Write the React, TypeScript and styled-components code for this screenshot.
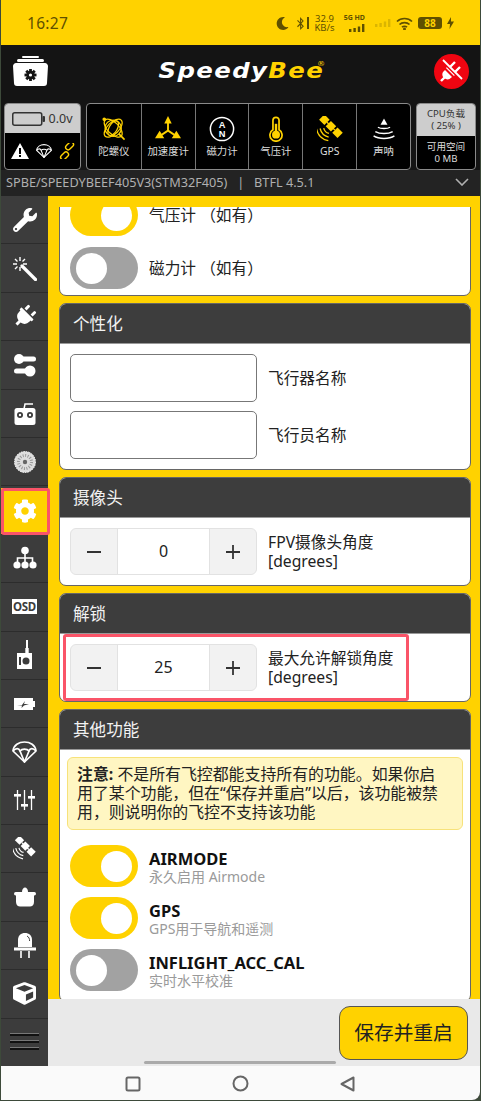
import React from 'react';
import styled, { createGlobalStyle } from 'styled-components';
import { FaWrench, FaPlug, FaCog, FaCube, FaMoon, FaBluetoothB } from 'react-icons/fa';

const Global = createGlobalStyle`
  html, body { margin: 0; padding: 0; background: #3d4a3a; }
  * { box-sizing: border-box; }
  body { font-family: "Noto Sans", "Noto Sans CJK SC", sans-serif; }
`;

const YELLOW = '#ffd200';

const Screen = styled.div`
  width: 479px;
  height: 1100px;
  margin-left: 1px;
  display: flex;
  flex-direction: column;
  overflow: hidden;
  border-radius: 0 0 8px 0;
  background: #141414;
`;

const StatusBar = styled.div`
  height: 45px;
  flex: none;
  background: ${YELLOW};
  color: #5f5000;
  display: flex;
  align-items: center;
  padding: 1px 26px 0 26px;
`;
const Clock = styled.div`
  font-size: 15.5px;
  flex: 1;
  letter-spacing: 0.3px;
`;
const StatusIcons = styled.div`
  display: flex;
  align-items: center;
  gap: 5px;
`;
const VibrateBar = styled.div`
  width: 2px;
  height: 12px;
  background: #5f5000;
  margin-left: -5px;
`;
const Speed = styled.div`
  font-size: 9.5px;
  line-height: 9px;
  text-align: center;
  width: 21px;
`;
const Net = styled.div`
  font-size: 7px;
  line-height: 8px;
  font-weight: 700;
  width: 22px;
  margin-left: 3px;
  display: flex;
  flex-direction: column;
  align-items: flex-end;
  gap: 2px;
`;
const FadedBars = styled.div`
  margin-left: 5px;
  display: flex;
  align-items: center;
`;
const BatteryPill = styled.div`
  width: 24px;
  height: 12px;
  border-radius: 3px;
  background: #5f5000;
  color: ${YELLOW};
  font-size: 10px;
  font-weight: 700;
  line-height: 12px;
  text-align: center;
`;

const Header = styled.div`
  height: 58px;
  flex: none;
  display: flex;
  align-items: center;
  justify-content: space-between;
  padding: 0 11px 6px 12px;
  background: #141414;
`;
const Logo = styled.div`
  position: relative;
  font-family: "DejaVu Sans", sans-serif;
  font-size: 21px;
  font-weight: 700;
  font-style: italic;
  letter-spacing: 1.2px;
  color: #fff;
  transform: scaleX(1.16);
  span { color: ${YELLOW}; }
  sup {
    position: absolute;
    font-size: 7px;
    font-style: normal;
    font-weight: 400;
    top: 1px;
    right: -2px;
    color: ${YELLOW};
  }
`;
const Disconnected = styled.div`
  width: 35px;
  height: 35px;
  border-radius: 50%;
  background: #f00511;
  display: flex;
  align-items: center;
  justify-content: center;
`;

const Strip = styled.div`
  flex: none;
  height: 67px;
  display: flex;
  gap: 5px;
  padding: 0 3px;
  background: #141414;
`;
const Box = styled.div<{ $w: number }>`
  width: ${p => p.$w}px;
  border: 1px solid #8a8a8a;
  border-radius: 4px;
  background: #000;
  overflow: hidden;
  display: flex;
  flex-direction: column;
`;
const BoxTop = styled.div<{ $h: number }>`
  height: ${p => p.$h}px;
  flex: none;
  background: #cdcdcd;
  color: #333;
  font-size: 9.6px;
  line-height: 12px;
  display: flex;
  flex-direction: column;
  align-items: center;
  justify-content: center;
  text-align: center;
`;
const BatteryLine = styled.div`
  display: flex;
  align-items: center;
  gap: 3px;
  font-size: 12.5px;
  color: #333;
`;
const BoxBottom = styled.div`
  flex: 1;
  color: #ddd;
  font-size: 9.6px;
  line-height: 12px;
  display: flex;
  flex-direction: column;
  align-items: center;
  justify-content: center;
`;
const AlertIcons = styled.div`
  flex: 1;
  display: flex;
  align-items: center;
  justify-content: center;
  gap: 7px;
`;
const Sensors = styled.div`
  width: 325px;
  border: 1px solid #8a8a8a;
  border-radius: 4px;
  background: #000;
  display: grid;
  grid-template-columns: repeat(6, 1fr);
`;
const Sensor = styled.div`
  border-left: 1px solid #777;
  &:first-child { border-left: 0; }
  color: #ddd;
  display: flex;
  flex-direction: column;
  align-items: center;
  padding-top: 12px;
  gap: 3px;
  white-space: nowrap;
  svg { display: block; width: 26px; height: 26px; }
`;
const SensorLabel = styled.div`
  font-size: 10.4px;
  line-height: 13px;
`;

const InfoRow = styled.div`
  height: 26px;
  flex: none;
  background: #232323;
  color: #b0b0b0;
  font-size: 12.7px;
  display: flex;
  align-items: center;
  justify-content: space-between;
  padding: 0 11px 2px 5px;
  white-space: pre;
`;

const Main = styled.div`
  flex: 1;
  min-height: 0;
  display: flex;
`;
const Sidebar = styled.div`
  width: 47px;
  flex: none;
  background: #3c3c3c;
  display: flex;
  flex-direction: column;
`;
const NavItem = styled.div<{ $active?: boolean }>`
  position: relative;
  height: ${p => (p.$active ? 46.4 : 48.4)}px;
  margin-top: ${p => (p.$active ? 2 : 0)}px;
  flex: none;
  display: flex;
  align-items: center;
  justify-content: center;
  color: #fff;
  border-bottom: 1px solid #2c2c2c;
  background: ${p => (p.$active ? YELLOW : 'transparent')};
  ${p =>
    p.$active &&
    `&::after {
      content: '';
      position: absolute;
      left: 0;
      right: -2px;
      top: 0;
      bottom: -1px;
      border: 3px solid #fa5468;
      border-radius: 3px;
      z-index: 2;
    }`}
`;
const OsdTag = styled.div`
  background: #fff;
  color: #3c3c3c;
  font-size: 11.5px;
  font-weight: 700;
  line-height: 15px;
  padding: 0 1px;
  letter-spacing: -0.3px;
`;
const Hamburger = styled.div`
  flex: 1;
  display: flex;
  flex-direction: column;
  justify-content: center;
  gap: 4px;
  padding: 0 9px 2px;
`;
const HamburgerLine = styled.div`
  height: 3px;
  background: #111;
  border-top: 1px solid #777;
`;

const Column = styled.div`
  flex: 1;
  min-width: 0;
  display: flex;
  flex-direction: column;
  position: relative;
`;
const Scroller = styled.div`
  flex: 1;
  min-height: 0;
  background: ${YELLOW};
  padding: 11px 9px 0 11px;
  display: flex;
`;
const Clip = styled.div`
  flex: 1;
  overflow: hidden;
  display: flex;
  flex-direction: column;
  gap: 7px;
`;
const Panel = styled.div<{ $offset?: number }>`
  flex: none;
  border: 1px solid #666;
  border-radius: 7px;
  background: #fff;
  margin-top: ${p => p.$offset ?? 0}px;
  overflow: hidden;
`;
const PanelHead = styled.div`
  height: 40px;
  background: #3d3d3d;
  color: #f2f2f2;
  font-size: 16.6px;
  line-height: 40px;
  padding-left: 13px;
  border-bottom: 1px solid #999;
`;
const PanelBody = styled.div<{ $gap?: number; $bottom?: number }>`
  position: relative;
  padding: 10px 10px ${p => p.$bottom ?? 10}px;
  display: flex;
  flex-direction: column;
  gap: ${p => p.$gap ?? 9}px;
`;
const Row = styled.div`
  display: flex;
  align-items: center;
  gap: 11px;
  font-size: 15.7px;
  line-height: 19px;
  color: #222;
`;
const FieldBox = styled.div`
  width: 187px;
  height: 48px;
  flex: none;
  background: #fff;
  border: 1px solid #777;
  border-radius: 5px;
`;
const Stepper = styled.div`
  width: 187px;
  height: 47px;
  flex: none;
  display: flex;
  border: 1px solid #e2e2e2;
  border-radius: 6px;
  overflow: hidden;
  background: #f2f2f2;
`;
const StepButton = styled.div`
  width: 46px;
  flex: none;
  display: flex;
  align-items: center;
  justify-content: center;
`;
const StepValue = styled.div`
  flex: 1;
  background: #fff;
  border-left: 1px solid #e2e2e2;
  border-right: 1px solid #e2e2e2;
  text-align: center;
  line-height: 45px;
  font-size: 16px;
  color: #222;
`;
const Highlight = styled.div`
  position: absolute;
  left: 3px;
  top: 0;
  width: 346px;
  height: 67px;
  border: 3px solid #fa5468;
  border-radius: 3px;
`;
const Note = styled.div`
  margin: -3px -3px 5px;
  padding: 7px 14px 7px 9px;
  background: #fff6c2;
  border: 1px solid #f7e27a;
  border-radius: 6px;
  font-size: 15.9px;
  line-height: 19px;
  color: #222;
  b { font-weight: 700; }
`;
const Track = styled.div<{ $on?: boolean }>`
  width: 68px;
  height: 42px;
  flex: none;
  border-radius: 21px;
  padding: 0 6px;
  background: ${p => (p.$on ? YELLOW : '#a2a2a2')};
  display: flex;
  align-items: center;
  justify-content: ${p => (p.$on ? 'flex-end' : 'flex-start')};
  &::after {
    content: '';
    width: 31px;
    height: 31px;
    border-radius: 50%;
    background: #fff;
  }
`;
const FeatureText = styled.div`
  display: flex;
  flex-direction: column;
`;
const FeatureName = styled.div`
  font-size: 16.5px;
  font-weight: 700;
  line-height: 20px;
  color: #111;
`;
const FeatureHint = styled.div`
  font-size: 14px;
  line-height: 15px;
  color: #9a9a9a;
`;
const BottomBar = styled.div`
  height: 67px;
  flex: none;
  background: #e9e9e9;
  display: flex;
  justify-content: flex-end;
  padding: 7px 12px 0 0;
`;
const SaveButton = styled.div`
  width: 129px;
  height: 54px;
  background: ${YELLOW};
  border: 1px solid #555;
  border-radius: 11px;
  color: #222;
  font-size: 19.7px;
  line-height: 52px;
  text-align: center;
`;
const ScrollThumb = styled.div`
  position: absolute;
  left: 96px;
  bottom: 2px;
  width: 192px;
  height: 3px;
  border-radius: 2px;
  background: #aaa;
`;
const NavBar = styled.div`
  height: 34px;
  flex: none;
  background: #fafafa;
  display: flex;
  align-items: center;
  justify-content: center;
  gap: 91px;
  padding: 1px 2px 0 0;
`;

const Svg: React.FC<{ s?: number; w?: number; children: React.ReactNode }> = ({ s = 28, w, children }) => (
  <svg width={w ?? s} height={s} viewBox={`0 0 ${w ?? s} ${s}`} fill="none">
    {children}
  </svg>
);

const WandIcon = () => (
  <Svg s={25} w={25}>
    <path d="M10 10 L23.5 23.5" stroke="#fff" strokeWidth="3.2" strokeLinecap="round" />
    <path d="M8 1 V5 M8 11 V15 M1 8 H5 M11 8 H15 M3 3 L5.5 5.5 M13 3 L10.5 5.5 M3 13 L5.5 10.5" stroke="#fff" strokeWidth="1.4" />
  </Svg>
);
const SitemapIcon = () => (
  <Svg s={24} w={24}>
    <circle cx="12" cy="4.5" r="3.8" fill="#fff" />
    <path d="M12 7 V18 M4.5 18 V12 H19.5 V18" stroke="#fff" strokeWidth="1.6" />
    <circle cx="4" cy="19" r="3.6" fill="#fff" />
    <circle cx="12" cy="19" r="3.6" fill="#fff" />
    <circle cx="20" cy="19" r="3.6" fill="#fff" />
  </Svg>
);
const ToggleIcon = () => (
  <Svg s={24} w={24}>
    <circle cx="6" cy="6" r="5" fill="#fff" />
    <rect x="6" y="3.5" width="17" height="5" rx="2.5" fill="#fff" />
    <rect x="1" y="15.5" width="17" height="5" rx="2.5" fill="#fff" />
    <circle cx="17" cy="18" r="5.5" fill="#fff" />
  </Svg>
);
const RemoteIcon = () => (
  <Svg s={26} w={22}>
    <path d="M10 9 L11 4 H19" stroke="#fff" strokeWidth="1.5" />
    <rect x="0.5" y="8" width="21" height="17" rx="2.5" fill="#fff" />
    <circle cx="6" cy="15" r="3" fill="#3c3c3c" />
    <circle cx="16" cy="15" r="3" fill="#3c3c3c" />
    <circle cx="6" cy="15" r="1.2" fill="#fff" />
    <circle cx="16" cy="15" r="1.2" fill="#fff" />
  </Svg>
);
const MotorIcon = () => (
  <Svg s={22} w={22}>
    <circle cx="11" cy="11" r="10.5" fill="#ddd" stroke="#fff" strokeDasharray="1.5 1" />
    <circle cx="11" cy="11" r="6.5" fill="none" stroke="#999" strokeDasharray="1 1.5" strokeWidth="3" />
    <circle cx="11" cy="11" r="2.2" fill="#666" />
  </Svg>
);
const ReceiverIcon = () => (
  <Svg s={30} w={18}>
    <path d="M11 0 V13" stroke="#fff" strokeWidth="2" />
    <path d="M11 8 V13" stroke="#fff" strokeWidth="3.4" />
    <rect x="1" y="13" width="15" height="16" fill="#fff" />
    <circle cx="10" cy="21" r="3.5" fill="#3c3c3c" />
    <rect x="3" y="17" width="2" height="8" fill="#3c3c3c" />
  </Svg>
);
const BatteryIcon = () => (
  <Svg s={14} w={21}>
    <rect x="0" y="1" width="19" height="12" fill="#fff" />
    <rect x="19" y="4" width="2" height="6" fill="#fff" />
    <path d="M3 8 H8 L11 4 L10 7 H15 L10 8.5 L7.5 11 L8 8.5 Z" fill="#3c3c3c" />
  </Svg>
);
const ParachuteIcon = ({ c = '#fff', s = 25 }: { c?: string; s?: number }) => (
  <svg width={s} height={s * 0.88} viewBox="0 0 25 22" fill="none" stroke={c} strokeWidth="1.7" strokeLinejoin="round">
    <path d="M1 10 C2 -2 23 -2 24 10 L12.5 21 Z" />
    <path d="M1 10 C4 6.5 7 7 8 10 C10 7.5 15 7.5 17 10 C18 7 21 6.5 24 10" />
    <path d="M8 10 L12.5 21 L17 10" />
  </svg>
);
const SlidersIcon = () => (
  <Svg s={21} w={21}>
    <path d="M3.5 0 V20 M10.5 0 V20 M17.5 0 V20" stroke="#fff" strokeWidth="1.3" />
    <rect x="0" y="4" width="7" height="2.6" fill="#fff" />
    <rect x="7" y="14" width="7" height="2.6" fill="#fff" />
    <rect x="14" y="6" width="7" height="2.6" fill="#fff" />
  </Svg>
);
const SatelliteIcon = ({ c = '#fff', s = 23 }: { c?: string; s?: number }) => (
  <svg width={s} height={s} viewBox="0 0 28 28" fill="none">
    <g transform="translate(15 11) rotate(45)">
      <rect x="-14" y="-4" width="8" height="8" fill={c} />
      <rect x="-4" y="-4" width="8" height="8" fill={c} />
      <rect x="6" y="-4" width="8" height="8" fill={c} />
      <path d="M-6 0 H6" stroke={c} strokeWidth="1.4" />
      <path d="M-4 7 Q0 9.5 4 7 M-6.5 10 Q0 14 6.5 10 M-9 13 Q0 19 9 13" stroke={c} strokeWidth="1.4" />
    </g>
  </svg>
);
const PotIcon = () => (
  <Svg s={20} w={22}>
    <path d="M8 5 C8 2 9.5 0.5 11 0.5 C12.5 0.5 14 2 14 5 Z" fill="#fff" />
    <rect x="0" y="5" width="22" height="3.4" rx="1.7" fill="#fff" />
    <path d="M2 8 H20 V15 C20 18 18 19.5 16 19.5 H6 C4 19.5 2 18 2 15 Z" fill="#fff" />
  </Svg>
);
const LedIcon = () => (
  <Svg s={27} w={22}>
    <path d="M4 15 V8 C4 3.5 7 1 11 1 C15 1 18 3.5 18 8 V15 Z" fill="#fff" />
    <path d="M13 4 C15 5 15.6 7 15.6 9" stroke="#3c3c3c" strokeWidth="1" />
    <rect x="0" y="15.5" width="22" height="3" fill="#fff" />
    <path d="M7 19 V26 M15 19 V26" stroke="#fff" strokeWidth="1.6" />
  </Svg>
);

const GyroIcon = () => (
  <svg viewBox="0 0 32 32" fill="none" stroke={YELLOW} strokeWidth="1.5">
    <ellipse cx="15" cy="15" rx="14" ry="7" transform="rotate(45 15 15)" />
    <ellipse cx="15" cy="15" rx="14" ry="7" transform="rotate(-45 15 15)" />
    <ellipse cx="15" cy="15" rx="10" ry="10" />
    <ellipse cx="15" cy="15" rx="5" ry="10" transform="rotate(30 15 15)" />
    <path d="M22 22 L29 29" strokeWidth="2" />
    <circle cx="4" cy="4" r="1.5" fill={YELLOW} />
  </svg>
);
const AccelIcon = () => (
  <svg viewBox="0 0 28 28" fill={YELLOW}>
    <path d="M14 0 L18 8 H15 V15 L21 19 L23 16 L28 24 L18 24 L20 21 L14 17 L8 21 L10 24 L0 24 L5 16 L7 19 L13 15 V8 H10 Z" />
  </svg>
);
const CompassLetter = styled.text`
  font-size: 10px;
  font-weight: 700;
  font-family: "Liberation Sans", sans-serif;
`;
const CompassIcon = () => (
  <svg viewBox="0 0 28 28" fill="none">
    <circle cx="14" cy="14" r="12.5" stroke="#fff" strokeWidth="1.6" />
    <CompassLetter x="14" y="13" fill="#fff" textAnchor="middle">A</CompassLetter>
    <CompassLetter x="14" y="23" fill="#fff" textAnchor="middle">N</CompassLetter>
  </svg>
);
const ThermoIcon = () => (
  <svg viewBox="0 0 30 30" fill="none">
    <path d="M11.5 5 a3.5 3.5 0 0 1 7 0 V16 a7 7 0 1 1 -7 0 Z" stroke={YELLOW} strokeWidth="2" />
    <circle cx="15" cy="21.5" r="4.6" fill={YELLOW} />
    <rect x="13.6" y="9" width="2.8" height="10" fill={YELLOW} />
  </svg>
);
const SonarIcon = () => (
  <svg viewBox="0 0 30 30" fill="none" stroke="#fff" strokeWidth="1.6">
    <path d="M15 3 L19 10 H11 Z" fill="#fff" stroke="none" />
    <path d="M8 13 C11 15 19 15 22 13" />
    <path d="M5 18 C10 21 20 21 25 18" />
    <path d="M3 23 C9 27 21 27 27 23" />
  </svg>
);
const WarnIcon = () => (
  <svg width="18" height="16" viewBox="0 0 18 16">
    <path d="M9 0 L18 16 H0 Z" fill="#fff" />
    <rect x="8" y="5" width="2" height="6" fill="#000" />
    <rect x="8" y="12" width="2" height="2" fill="#000" />
  </svg>
);
const LinkIcon = () => (
  <svg width="16" height="16" viewBox="0 0 16 16" fill="none" stroke={YELLOW} strokeWidth="1.4">
    <rect x="8" y="-1.6" width="5" height="9" rx="2.5" transform="rotate(45 10.5 3)" />
    <rect x="3" y="8.4" width="5" height="9" rx="2.5" transform="rotate(45 5.5 13)" />
  </svg>
);
const ToolboxIcon = () => (
  <svg width="35" height="31" viewBox="0 0 35 31">
    <rect x="9" y="0" width="17" height="2" rx="1" fill="#fff" />
    <rect x="4" y="3" width="27" height="3" rx="1.5" fill="#fff" />
    <path d="M3 7 H32 C33.5 7 35 8.5 35 10 L34 27 C34 29 33 30 31 30 H4 C2 30 1 29 1 27 L0 10 C0 8.5 1.5 7 3 7 Z" fill="#fff" />
    <g transform="translate(17.5,19)" fill="#141414">
      <circle r="4.2" />
      <rect x="-1.4" y="-6" width="2.8" height="12" />
      <rect x="-6" y="-1.4" width="12" height="2.8" />
      <rect x="-1.4" y="-6" width="2.8" height="12" transform="rotate(45)" />
      <rect x="-1.4" y="-6" width="2.8" height="12" transform="rotate(-45)" />
      <circle r="1.6" fill="#fff" />
    </g>
  </svg>
);
const UnplugIcon = () => (
  <svg width="26" height="26" viewBox="0 0 26 26" stroke="#fff" fill="#fff">
    <path d="M3 23 L8 18" strokeWidth="2.4" />
    <path d="M7 12 L14 19 L11.5 21 C9.5 22 7 21 5.5 19.5 C4 18 4 15.5 5 14 Z" stroke="none" />
    <path d="M12 9 L17 4 M17 14 L22 9" strokeWidth="2.4" />
    <path d="M9 9 L17 17" strokeWidth="3" />
    <path d="M4 3 L24 23" strokeWidth="2" stroke="#f00511" />
    <path d="M5 2 L24 21" strokeWidth="1.8" />
  </svg>
);
const WifiIcon = () => (
  <svg width="17" height="13" viewBox="0 0 17 13" fill="none" stroke="#5f5000" strokeWidth="1.7">
    <path d="M1 4.5 C5 0.5 12 0.5 16 4.5" />
    <path d="M3.5 7.5 C6 5 11 5 13.5 7.5" />
    <path d="M6 10.2 C7.3 9 9.7 9 11 10.2" />
    <circle cx="8.5" cy="12" r="0.6" fill="#5f5000" />
  </svg>
);
const SignalBars: React.FC<{ c: string; o?: number }> = ({ c, o = 1 }) => (
  <svg width="16" height="8" viewBox="0 0 16 8" fill={c} opacity={o}>
    <rect x="0" y="5" width="2.4" height="3" />
    <rect x="4.4" y="4" width="2.4" height="4" />
    <rect x="8.8" y="2.5" width="2.4" height="5.5" />
    <rect x="13" y="0" width="2.4" height="8" />
  </svg>
);
const BoltIcon = () => (
  <svg width="7" height="12" viewBox="0 0 7 12" fill="#5f5000">
    <path d="M4 0 L0 7 H3 L2.5 12 L7 4.5 H4 Z" />
  </svg>
);
const EmptyBattery = () => (
  <svg width="33" height="14" viewBox="0 0 33 14" fill="none">
    <rect x="0.75" y="0.75" width="29" height="12.5" rx="2" stroke="#333" strokeWidth="1.5" />
    <rect x="30.5" y="4" width="2.5" height="6" rx="1" fill="#333" />
  </svg>
);
const Chevron = () => (
  <svg width="14" height="8" viewBox="0 0 14 8" fill="none" stroke="#b0b0b0" strokeWidth="1.6">
    <path d="M1 1 L7 7 L13 1" />
  </svg>
);
const Minus = () => (
  <svg width="16" height="16" viewBox="0 0 16 16" stroke="#333" strokeWidth="1.8">
    <path d="M1 8 H15" />
  </svg>
);
const Plus = () => (
  <svg width="16" height="16" viewBox="0 0 16 16" stroke="#333" strokeWidth="1.8">
    <path d="M1 8 H15 M8 1 V15" />
  </svg>
);
const NavSquare = () => (
  <svg width="16" height="16" viewBox="0 0 16 16" fill="none" stroke="#666" strokeWidth="2">
    <rect x="1.5" y="1.5" width="13" height="13" rx="1.5" />
  </svg>
);
const NavCircle = () => (
  <svg width="17" height="17" viewBox="0 0 17 17" fill="none" stroke="#666" strokeWidth="2">
    <circle cx="8.5" cy="8.5" r="7" />
  </svg>
);
const NavBack = () => (
  <svg width="15" height="16" viewBox="0 0 15 16" fill="none" stroke="#666" strokeWidth="2" strokeLinejoin="round">
    <path d="M13.5 1.5 V14.5 L1.5 8 Z" />
  </svg>
);

const Field: React.FC<{ label: string }> = ({ label }) => (
  <Row>
    <FieldBox />
    <span>{label}</span>
  </Row>
);

const NumberRow: React.FC<{ value: number; label: string }> = ({ value, label }) => (
  <Row>
    <Stepper>
      <StepButton><Minus /></StepButton>
      <StepValue>{value}</StepValue>
      <StepButton><Plus /></StepButton>
    </Stepper>
    <span>
      {label}
      <br />
      [degrees]
    </span>
  </Row>
);

const Feature: React.FC<{ on?: boolean; name: string; hint: string }> = ({ on, name, hint }) => (
  <Row>
    <Track $on={on} />
    <FeatureText>
      <FeatureName>{name}</FeatureName>
      <FeatureHint>{hint}</FeatureHint>
    </FeatureText>
  </Row>
);

const sidebarIcons: React.ReactNode[] = [
  <FaWrench size={24} />,
  <WandIcon />,
  <FaPlug size={23} style={{ transform: 'rotate(45deg)' }} />,
  <ToggleIcon />,
  <RemoteIcon />,
  <MotorIcon />,
  <FaCog size={24} />,
  <SitemapIcon />,
  <OsdTag>OSD</OsdTag>,
  <ReceiverIcon />,
  <BatteryIcon />,
  <ParachuteIcon />,
  <SlidersIcon />,
  <SatelliteIcon />,
  <PotIcon />,
  <LedIcon />,
  <FaCube size={23} />,
];

export default function App() {
  return (
    <>
      <Global />
      <Screen>
        <StatusBar>
          <Clock>16:27</Clock>
          <StatusIcons>
            <FaMoon size={13} />
            <FaBluetoothB size={13} />
            <VibrateBar />
            <Speed>32.9<br />KB/s</Speed>
            <Net>
              5G HD
              <SignalBars c="#5f5000" />
            </Net>
            <FadedBars><SignalBars c="#5f5000" o={0.22} /></FadedBars>
            <WifiIcon />
            <BatteryPill>88</BatteryPill>
            <BoltIcon />
          </StatusIcons>
        </StatusBar>

        <Header>
          <ToolboxIcon />
          <Logo>Speedy<span>Bee</span><sup>®</sup></Logo>
          <Disconnected><UnplugIcon /></Disconnected>
        </Header>

        <Strip>
          <Box $w={77}>
            <BoxTop $h={29}>
              <BatteryLine><EmptyBattery />0.0v</BatteryLine>
            </BoxTop>
            <AlertIcons>
              <WarnIcon />
              <ParachuteIcon s={16} />
              <LinkIcon />
            </AlertIcons>
          </Box>
          <Sensors>
            <Sensor><GyroIcon /><SensorLabel>陀螺仪</SensorLabel></Sensor>
            <Sensor><AccelIcon /><SensorLabel>加速度计</SensorLabel></Sensor>
            <Sensor><CompassIcon /><SensorLabel>磁力计</SensorLabel></Sensor>
            <Sensor><ThermoIcon /><SensorLabel>气压计</SensorLabel></Sensor>
            <Sensor><SatelliteIcon c={YELLOW} /><SensorLabel>GPS</SensorLabel></Sensor>
            <Sensor><SonarIcon /><SensorLabel>声呐</SensorLabel></Sensor>
          </Sensors>
          <Box $w={60}>
            <BoxTop $h={32}>
              <span>CPU负载</span>
              <span>( 25% )</span>
            </BoxTop>
            <BoxBottom>
              <span>可用空间</span>
              <span>0 MB</span>
            </BoxBottom>
          </Box>
        </Strip>

        <InfoRow>
          <span>SPBE/SPEEDYBEEF405V3(STM32F405)   |   BTFL 4.5.1</span>
          <Chevron />
        </InfoRow>

        <Main>
          <Sidebar>
            {sidebarIcons.map((icon, i) => (
              <NavItem key={i} $active={i === 6}>{icon}</NavItem>
            ))}
            <Hamburger>
              <HamburgerLine />
              <HamburgerLine />
              <HamburgerLine />
            </Hamburger>
          </Sidebar>

          <Column>
            <Scroller>
              <Clip>
                <Panel $offset={-24}>
                  <PanelBody $gap={11} $bottom={6}>
                    <Row><Track $on /><span>气压计 （如有）</span></Row>
                    <Row><Track /><span>磁力计 （如有）</span></Row>
                  </PanelBody>
                </Panel>

                <Panel>
                  <PanelHead>个性化</PanelHead>
                  <PanelBody>
                    <Field label="飞行器名称" />
                    <Field label="飞行员名称" />
                  </PanelBody>
                </Panel>

                <Panel>
                  <PanelHead>摄像头</PanelHead>
                  <PanelBody>
                    <NumberRow value={0} label="FPV摄像头角度" />
                  </PanelBody>
                </Panel>

                <Panel>
                  <PanelHead>解锁</PanelHead>
                  <PanelBody>
                    <NumberRow value={25} label="最大允许解锁角度" />
                    <Highlight />
                  </PanelBody>
                </Panel>

                <Panel>
                  <PanelHead>其他功能</PanelHead>
                  <PanelBody $gap={10}>
                    <Note>
                      <b>注意:</b> 不是所有飞控都能支持所有的功能。如果你启用了某个功能，但在“保存并重启”以后，该功能被禁用，则说明你的飞控不支持该功能
                    </Note>
                    <Feature on name="AIRMODE" hint="永久启用 Airmode" />
                    <Feature on name="GPS" hint="GPS用于导航和遥测" />
                    <Feature name="INFLIGHT_ACC_CAL" hint="实时水平校准" />
                  </PanelBody>
                </Panel>
              </Clip>
            </Scroller>
            <BottomBar>
              <SaveButton>保存并重启</SaveButton>
            </BottomBar>
            <ScrollThumb />
          </Column>
        </Main>

        <NavBar>
          <NavSquare />
          <NavCircle />
          <NavBack />
        </NavBar>
      </Screen>
    </>
  );
}
